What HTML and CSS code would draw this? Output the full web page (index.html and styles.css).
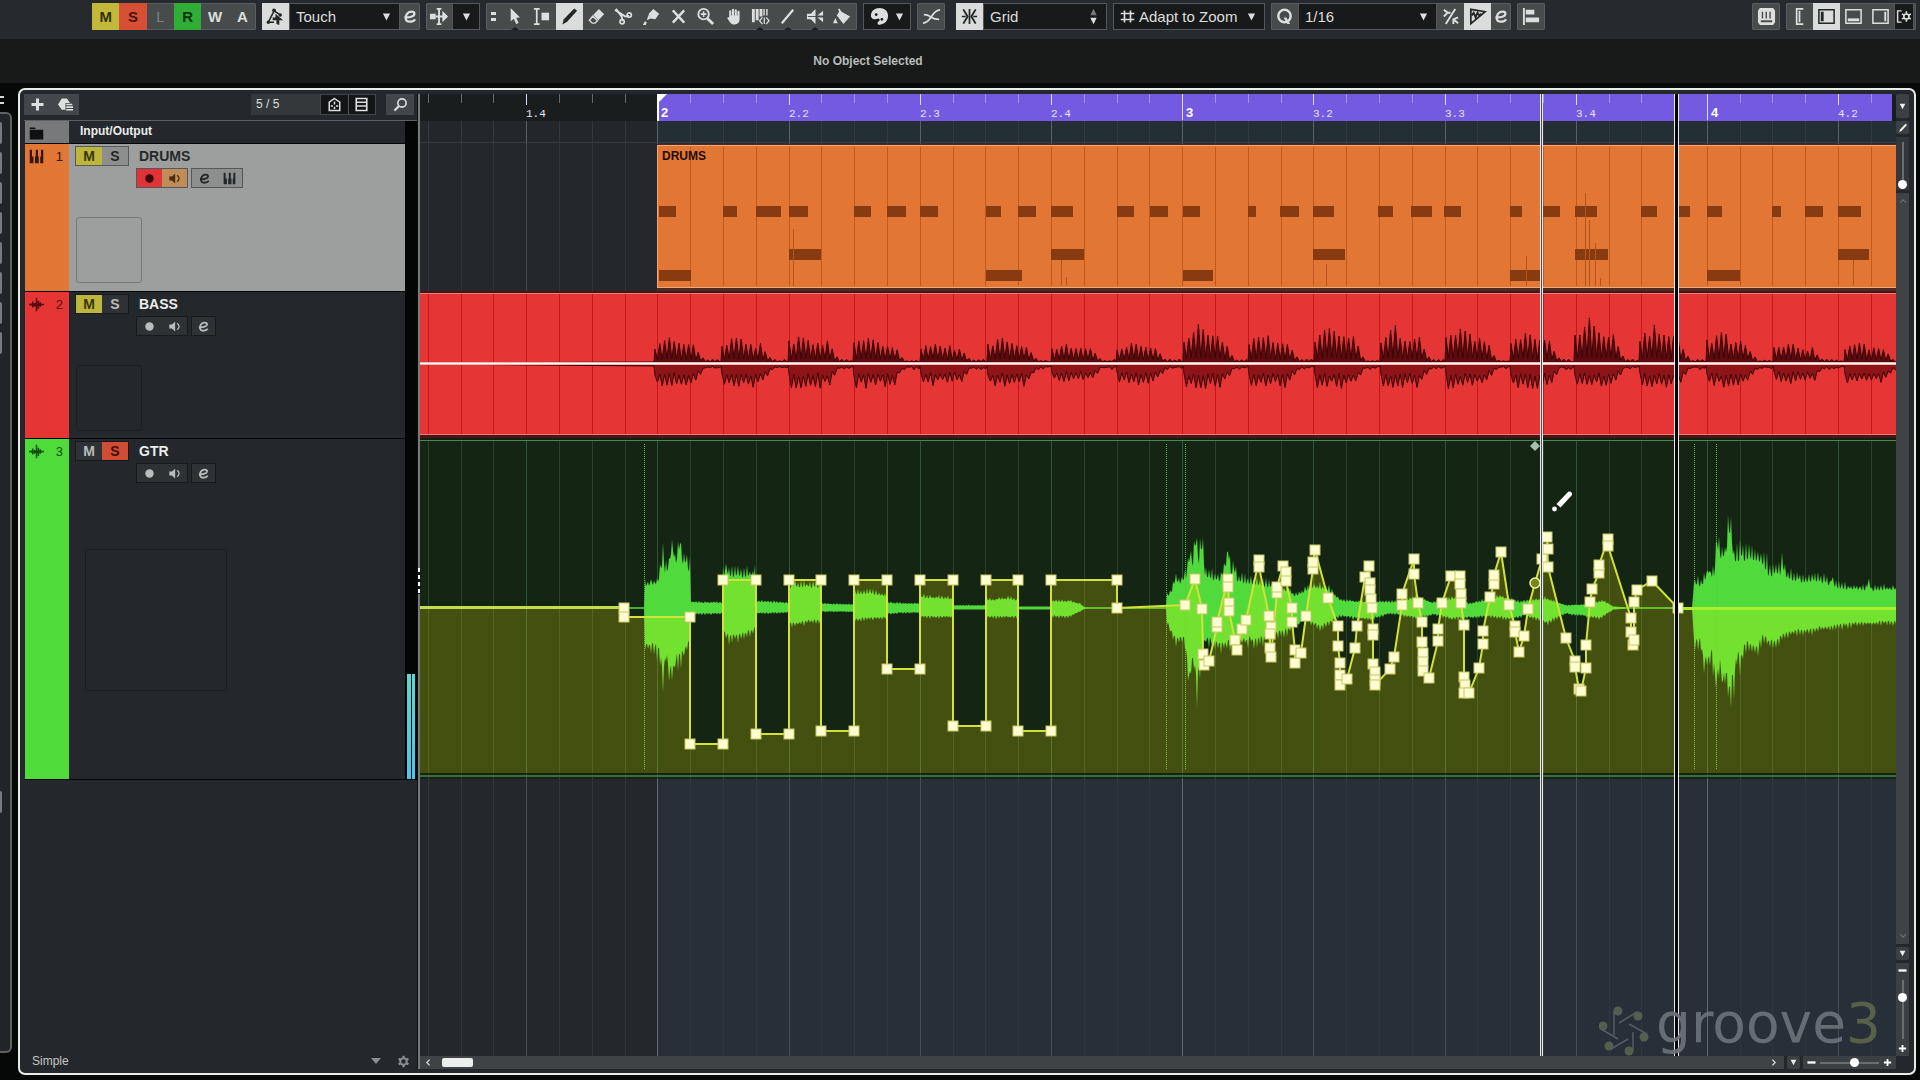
FILE: index.html
```html
<!DOCTYPE html>
<html lang="en">
<head>
<meta charset="utf-8">
<title>Project</title>
<link rel="stylesheet" href="styles.css">
</head>
<body>
<svg class="sprite" aria-hidden="true">
  <symbol id="i-auto" viewBox="0 0 20 20"><path d="M2.500 16 8.500 4l6 4M2.500 16h6" fill="none" stroke="currentColor" stroke-width="1.600"/><circle cx="8.500" cy="3.500" r="2"/><circle cx="2.500" cy="16" r="1.800"/><circle cx="15" cy="8.500" r="1.800"/><path d="M10 7l8 7h-4v5l-3-1v-4H7v-3h3z"/></symbol>
  <symbol id="i-e" viewBox="0 0 20 20"><path d="M3.500 11c6 .5 12-1 12-4.500C15.500 3.500 9 2.800 6 7c-3 4.500-1.500 9.500 3.500 9.500 3 0 5.500-1 7-3" fill="none" stroke="currentColor" stroke-width="2.800"/></symbol>
  <symbol id="i-scroll" viewBox="0 0 20 20"><path d="M0 7h6v6H0zM13 4l6 6-6 6z"/><path d="M9.500 2v16M7 2h5M7 18h5M6 10h8" fill="none" stroke="currentColor" stroke-width="2"/></symbol>
  <symbol id="i-arrow" viewBox="0 0 20 20"><path d="M6 1v14l3.300-2.600 2.400 5.600 2.600-1.100-2.500-5.500 4-.4z"/></symbol>
  <symbol id="i-range" viewBox="0 0 20 20"><path d="M2 2h6M2 18h6M5 2v16" fill="none" stroke="currentColor" stroke-width="1.800"/><path d="M10 6h8v8h-8z"/></symbol>
  <symbol id="i-pencil" viewBox="0 0 20 20"><path d="M15 1.500 18 4 7.500 15.500 2.500 18.500 4 13z"/></symbol>
  <symbol id="i-eraser" viewBox="0 0 20 20"><path d="M12.500 2 18 7.500l-6 6.500L6.500 8.500z"/><path d="m6 9.500 5 5-2.500 2.500H5.500L2.500 14z" fill="none" stroke="currentColor" stroke-width="1.500"/></symbol>
  <symbol id="i-cut" viewBox="0 0 20 20"><path d="m1 3 11 7 4-.5M2 2l6 8 1 5" fill="none" stroke="currentColor" stroke-width="2"/><circle cx="16" cy="8.500" r="2.300" fill="none" stroke="currentColor" stroke-width="1.700"/><circle cx="8.500" cy="15.500" r="2.300" fill="none" stroke="currentColor" stroke-width="1.700"/></symbol>
  <symbol id="i-glue" viewBox="0 0 20 20"><path d="m12 2 6 5-4 6-5-1-2-5zM7 8l2 4-4 2zM3 15l2 1-1 3H1z"/></symbol>
  <symbol id="i-x" viewBox="0 0 20 20"><path d="m4 3.500 12 13M16 3.500 4 16.500" fill="none" stroke="currentColor" stroke-width="2.600"/></symbol>
  <symbol id="i-zoom" viewBox="0 0 20 20"><circle cx="8" cy="7.500" r="5.500" fill="none" stroke="currentColor" stroke-width="2"/><path d="m12 12 6 6" stroke="currentColor" stroke-width="3"/><path d="M5 7.500h6M8 4.500v6" stroke="currentColor" stroke-width="1.600"/></symbol>
  <symbol id="i-hand" viewBox="0 0 20 20"><path d="M5.500 11V4.500a1.100 1.100 0 0 1 2.200 0V9h.7V3a1.100 1.100 0 0 1 2.200 0v6h.7V3.500a1.100 1.100 0 0 1 2.200 0V9h.7V5a1.100 1.100 0 0 1 2.200 0v8c0 3-2 5.500-5 5.500-4 0-5-2-8-7 1-1 2.100-.5 2.100-.5z"/></symbol>
  <symbol id="i-warp" viewBox="0 0 20 20"><path d="M1 2h3v14H1zM5 2h3v12H5zM9 2h3v8H9zM13 2h1.500v7H13zM16 2h1.500v7H16z"/><path d="m12 11-3 3.500 3 3.500m4-7 3 3.500-3 3.500M14 11v7" fill="none" stroke="currentColor" stroke-width="1.300"/></symbol>
  <symbol id="i-line" viewBox="0 0 20 20"><path d="M4 17 16 3" stroke="currentColor" stroke-width="2.400"/></symbol>
  <symbol id="i-mute" viewBox="0 0 20 20"><path d="M1 7h4l5-5v16l-5-5H1zM12 9l6-5v5zM12 11h6v5z"/><path d="M2 10h9" stroke="#484b4c" stroke-width="1"/></symbol>
  <symbol id="i-fill" viewBox="0 0 20 20"><path d="m7 4 11 6-7 8-7-9z"/><path d="m9 7-3-5" stroke="currentColor" stroke-width="1.800"/><path d="M2.500 11.500 5 17H0z"/></symbol>
  <symbol id="i-color" viewBox="0 0 20 20"><path fill-rule="evenodd" d="M10 1c5 0 9 3 9 8 0 4-2 8-6 9-3 1-5 1-5-1s3-2 2-4-3 0-5 0c-3 0-4-2-4-4 0-5 4-8 9-8zM5 8a1.500 1.500 0 1 0 3 0 1.500 1.500 0 0 0-3 0zm6 5a1.500 1.500 0 1 0 3 0 1.500 1.500 0 0 0-3 0z"/></symbol>
  <symbol id="i-cross" viewBox="0 0 20 20"><path d="M1 17c9 0 9-14 18-14M2 8c5 0 5 1 8 3s4 2 8 2" fill="none" stroke="currentColor" stroke-width="1.800"/></symbol>
  <symbol id="i-snap" viewBox="0 0 20 20"><path d="M10 2v16M2 10h4M14 10h4" stroke="currentColor" stroke-width="1.800"/><path d="m3.500 2.500 4.500 7.500-4.500 7.500M16.500 2.500 12 10l4.500 7.500" fill="none" stroke="currentColor" stroke-width="2"/></symbol>
  <symbol id="i-hash" viewBox="0 0 20 20"><path d="M6 2v16M14 2v16M1 6h18M1 14h18" stroke="currentColor" stroke-width="2.200"/></symbol>
  <symbol id="i-q" viewBox="0 0 20 20"><circle cx="10" cy="9.500" r="6.500" fill="none" stroke="currentColor" stroke-width="2.600"/><path d="M9 11h3l4 7h-3z"/></symbol>
  <symbol id="i-iq" viewBox="0 0 20 20"><path d="M15 2 5 18M3 3l4 3-4 4M7 6h3M18 11l-5 2v5M13 13l5 4" fill="none" stroke="currentColor" stroke-width="2"/></symbol>
  <symbol id="i-wavq" viewBox="0 0 20 20"><path d="M3 2.500v15L18 5z" fill="none" stroke="currentColor" stroke-width="1.800"/><path d="m4 9 2-3 2 5 2-5 2 3 2-2" fill="none" stroke="currentColor" stroke-width="2"/></symbol>
  <symbol id="i-align" viewBox="0 0 20 20"><path d="M1 1h2v18H1zM4 3h9v5H4zM4 11h14v5H4z"/></symbol>
  <symbol id="i-keys" viewBox="0 0 20 20"><path fill-rule="evenodd" d="M3 1h14l2 3v12l-2 3H3l-2-3V4zm2 4v7h1.500V5zm4 0v7h1.500V5zm4 0v7h1.500V5zM4 14v2h12v-2z"/></symbol>
  <symbol id="i-z1" viewBox="0 0 20 20"><path d="M14 2H7v16h7M10 4v12" fill="none" stroke="currentColor" stroke-width="1.800"/></symbol>
  <symbol id="i-z2" viewBox="0 0 20 20"><path d="M2 3h16v14H2z" fill="none" stroke="currentColor" stroke-width="1.600"/><path d="M4 5h3v10H4z"/></symbol>
  <symbol id="i-z3" viewBox="0 0 20 20"><path d="M2 3h16v14H2z" fill="none" stroke="currentColor" stroke-width="1.600"/><path d="M4 12h12v3H4z"/></symbol>
  <symbol id="i-z4" viewBox="0 0 20 20"><path d="M2 3h16v14H2z" fill="none" stroke="currentColor" stroke-width="1.600"/><path d="M14 5h2v10h-2z"/></symbol>
  <symbol id="i-gear" viewBox="0 0 20 20"><circle cx="10" cy="10" r="5" fill="none" stroke="currentColor" stroke-width="3"/><path d="M10 1v4M10 15v4M2.500 5.500 6 7.600M14 12.400l3.500 2.100M2.500 14.500 6 12.400M14 7.600l3.500-2.100" stroke="currentColor" stroke-width="3.400"/></symbol>
  <symbol id="i-layout" viewBox="0 0 20 20"><path d="M7 3H2v14h5" fill="none" stroke="currentColor" stroke-width="1.800"/><circle cx="13" cy="10" r="3.200" fill="none" stroke="currentColor" stroke-width="2"/><path d="M13 3.500v3M13 13.500v3M7.500 6.800l2.500 1.500M16 11.700l2.500 1.500M7.500 13.200l2.500-1.500M16 8.300l2.500-1.500" stroke="currentColor" stroke-width="2"/></symbol>
  <symbol id="i-plus" viewBox="0 0 20 20"><path d="M10 2v16M2 10h16" stroke="currentColor" stroke-width="4"/></symbol>
  <symbol id="i-preset" viewBox="0 0 20 20"><path d="M5 2h7l4 6h-6v9H5L0 10z"/><path d="M11 10h8M11 13.500h9M11 17h9" stroke="currentColor" stroke-width="2.200"/></symbol>
  <symbol id="i-agents" viewBox="0 0 20 20"><path d="m10 2 7 5v11H3V7z" fill="none" stroke="currentColor" stroke-width="2"/><path d="M10 6v4M10 13v3M5 12h3M12 12h3" stroke="currentColor" stroke-width="2"/></symbol>
  <symbol id="i-list" viewBox="0 0 20 20"><path d="M3 2h14v16H3zM3 7h14M3 12h14" fill="none" stroke="currentColor" stroke-width="2.200"/></symbol>
  <symbol id="i-find" viewBox="0 0 20 20"><circle cx="12" cy="8" r="5.500" fill="none" stroke="currentColor" stroke-width="2.200"/><path d="m8 12-6 6" stroke="currentColor" stroke-width="3"/></symbol>
  <symbol id="i-folder" viewBox="0 0 20 20"><path d="M1 2h7l1 2H1zM1 5h18v13H1z"/></symbol>
  <symbol id="i-piano" viewBox="0 0 20 20"><path d="M1 1h3v9h2v9H1zM8 10h1V1h3v9h1v9H8zM15 10h1V1h3v18h-4z"/></symbol>
  <symbol id="i-wave" viewBox="0 0 20 20"><path d="M0 10h3M5 6v8M7.500 8v5M10 1v18M12.500 5v11M15 7v6M17 10h3M3 9v2" stroke="currentColor" stroke-width="2"/><path d="M3 8.500h14v3.500H3z"/></symbol>
  <symbol id="i-rec" viewBox="0 0 20 20"><circle cx="10" cy="10" r="6.500"/></symbol>
  <symbol id="i-mon" viewBox="0 0 20 20"><path d="M2 7h4l5-4.500v15L6 13H2z"/><path d="M14 5c4 3 4 7 0 10" fill="none" stroke="currentColor" stroke-width="2"/></symbol>
  <symbol id="i-down" viewBox="0 0 20 20"><path d="M2 2h16l-8 16z"/></symbol>
  <symbol id="i-up" viewBox="0 0 20 20"><path d="M2 18h16L10 2z"/></symbol>
  <symbol id="i-chev" viewBox="0 0 20 20"><path d="m6 3 7 7-7 7" fill="none" stroke="currentColor" stroke-width="3"/></symbol>
  <symbol id="i-minus" viewBox="0 0 20 20"><path d="M1 10h18" stroke="currentColor" stroke-width="5"/></symbol>
</svg>

<header class="toolbar">
  <div class="group states">
    <button class="on-yellow">M</button><button class="on-red">S</button><button class="off">L</button><button class="on-green">R</button><button>W</button><button>A</button>
  </div>
  <div class="group automation">
    <button class="cell active" aria-label="Automation"><svg><use href="#i-auto"/></svg></button>
    <label class="drop"><select aria-label="Automation mode"><option>Touch</option></select><svg><use href="#i-down"/></svg></label>
    <button class="narrow" aria-label="Automation panel"><svg><use href="#i-e"/></svg></button>
  </div>
  <div class="group scrollmode">
    <button aria-label="Auto-scroll"><svg><use href="#i-scroll"/></svg></button>
    <button class="dark" aria-label="Auto-scroll settings"><svg class="tri"><use href="#i-down"/></svg></button>
  </div>
  <div class="group tools">
    <span class="grip"></span>
    <button class="more" aria-label="Select"><svg><use href="#i-arrow"/></svg></button>
    <button aria-label="Range"><svg><use href="#i-range"/></svg></button>
    <button class="active" aria-label="Draw"><svg><use href="#i-pencil"/></svg></button>
    <button aria-label="Erase"><svg><use href="#i-eraser"/></svg></button>
    <button aria-label="Split"><svg><use href="#i-cut"/></svg></button>
    <button aria-label="Glue"><svg><use href="#i-glue"/></svg></button>
    <button aria-label="Mute"><svg><use href="#i-x"/></svg></button>
    <button aria-label="Zoom"><svg><use href="#i-zoom"/></svg></button>
    <button aria-label="Comp"><svg><use href="#i-hand"/></svg></button>
    <button class="more" aria-label="Time warp"><svg><use href="#i-warp"/></svg></button>
    <button class="more" aria-label="Line"><svg><use href="#i-line"/></svg></button>
    <button class="more" aria-label="Play"><svg><use href="#i-mute"/></svg></button>
    <button aria-label="Color"><svg><use href="#i-fill"/></svg></button>
  </div>
  <div class="group palette">
    <button class="dark" aria-label="Colors"><svg><use href="#i-color"/></svg><svg class="tri"><use href="#i-down"/></svg></button>
  </div>
  <div class="group single"><button aria-label="Crossfade"><svg><use href="#i-cross"/></svg></button></div>
  <div class="group snap">
    <button class="cell active" aria-label="Snap"><svg><use href="#i-snap"/></svg></button>
    <label class="drop"><select aria-label="Snap type"><option>Grid</option></select><span class="spin"><svg><use href="#i-up"/></svg><svg><use href="#i-down"/></svg></span></label>
  </div>
  <div class="group gridtype">
    <label class="drop with-icon"><svg class="lead"><use href="#i-hash"/></svg><select aria-label="Grid type"><option>Adapt to Zoom</option></select><svg><use href="#i-down"/></svg></label>
  </div>
  <div class="group quantize">
    <button class="cell" aria-label="Quantize"><svg><use href="#i-q"/></svg></button>
    <label class="drop"><select aria-label="Quantize preset"><option>1/16</option></select><svg><use href="#i-down"/></svg></label>
    <button class="cell" aria-label="Iterative"><svg><use href="#i-iq"/></svg></button>
    <button class="cell active" aria-label="AudioWarp quantize"><svg><use href="#i-wavq"/></svg></button>
    <button class="narrow" aria-label="Quantize panel"><svg><use href="#i-e"/></svg></button>
  </div>
  <div class="group single"><button aria-label="Align"><svg><use href="#i-align"/></svg></button></div>
  <div class="group single end"><button aria-label="On-screen keyboard"><svg><use href="#i-keys"/></svg></button></div>
  <div class="group zones">
    <button class="cell" aria-label="Inspector"><svg><use href="#i-z1"/></svg></button>
    <button class="cell active" aria-label="Left zone"><svg><use href="#i-z2"/></svg></button>
    <button class="cell" aria-label="Lower zone"><svg><use href="#i-z3"/></svg></button>
    <button class="cell" aria-label="Right zone"><svg><use href="#i-z4"/></svg></button>
    <button class="dark narrow" aria-label="Set up window layout"><svg class="layout"><use href="#i-layout"/></svg></button>
  </div>
</header>

<div class="infoline">No Object Selected</div>

<main class="workspace">
  <aside class="rail">
    <span class="rail-menu"></span>
    <div class="rail-panel"><i></i><i></i><i></i><i></i><i></i><i></i><i></i><i></i><i class="last"></i></div>
  </aside>

  <div class="window">
    <section class="tracklist">
      <div class="list-head">
        <div class="minis add"><button aria-label="Add track"><svg><use href="#i-plus"/></svg></button><button aria-label="Track preset"><svg><use href="#i-preset"/></svg></button></div>
        <div class="count">5 / 5</div>
        <div class="minis views"><button aria-label="Visibility agents"><svg><use href="#i-agents"/></svg></button><button aria-label="Visibility presets"><svg><use href="#i-list"/></svg></button></div>
        <div class="minis find"><button aria-label="Find tracks"><svg><use href="#i-find"/></svg></button></div>
      </div>
      <div class="track io"><div class="tag"><svg><use href="#i-folder"/></svg></div><div class="body">Input/Output</div><div class="meter"></div></div>

      <div class="track drums">
        <div class="tag"><svg><use href="#i-piano"/></svg><span>1</span></div>
        <div class="body">
          <div class="line"><div class="ms"><button class="lit">M</button><button>S</button></div><h2>DRUMS</h2></div>
          <div class="line second"><div class="ms"><button class="rec" aria-label="Record"><svg><use href="#i-rec"/></svg></button><button class="mon" aria-label="Monitor"><svg><use href="#i-mon"/></svg></button></div><div class="ms"><button aria-label="Edit channel"><svg><use href="#i-e"/></svg></button><button aria-label="Edit instrument"><svg><use href="#i-piano"/></svg></button></div></div>
          <div class="slot"></div>
        </div>
        <div class="meter"></div>
      </div>

      <div class="track bass">
        <div class="tag"><svg><use href="#i-wave"/></svg><span>2</span></div>
        <div class="body">
          <div class="line"><div class="ms"><button class="lit">M</button><button>S</button></div><h2>BASS</h2></div>
          <div class="line second"><div class="ms"><button aria-label="Record"><svg><use href="#i-rec"/></svg></button><button aria-label="Monitor"><svg><use href="#i-mon"/></svg></button></div><div class="ms one"><button aria-label="Edit channel"><svg><use href="#i-e"/></svg></button></div></div>
          <div class="slot"></div>
        </div>
        <div class="meter"></div>
      </div>

      <div class="track gtr">
        <div class="tag"><svg><use href="#i-wave"/></svg><span>3</span></div>
        <div class="body">
          <div class="line"><div class="ms"><button>M</button><button class="solo">S</button></div><h2>GTR</h2></div>
          <div class="line second"><div class="ms"><button aria-label="Record"><svg><use href="#i-rec"/></svg></button><button aria-label="Monitor"><svg><use href="#i-mon"/></svg></button></div><div class="ms one"><button aria-label="Edit channel"><svg><use href="#i-e"/></svg></button></div></div>
          <div class="slot"></div>
        </div>
        <div class="meter"><b></b><b></b></div>
      </div>

      <footer class="list-foot"><span>Simple</span><svg class="pick" viewBox="0 0 10 6"><path d="M0 0h10L5 6z"/></svg><svg class="gear"><use href="#i-gear"/></svg></footer>
    </section>

    <div class="divider"><span></span></div>

    <section class="arrange">
      <div class="lanes">
        <svg class="lane ruler" id="ruler"></svg>
        <svg class="lane marker" id="marker"></svg>
        <svg class="lane short" id="drums"></svg>
        <svg class="lane short" id="bass"></svg>
        <svg class="lane tall" id="gtr"></svg>
        <svg class="lane empty" id="empty"></svg>
        <div class="playhead ghost"></div>
        <div class="playhead"></div>
        <svg class="cursor" viewBox="0 0 24 24"><path d="M5.500 15 17.500 2.500q4-.5 3.500 3.500L9.500 18.500z" fill="#fff"/><circle cx="3.500" cy="20" r="2.400" fill="#fff"/></svg>
        <div class="watermark">
          <svg viewBox="0 0 50 50"><g fill="#5c6450"><circle cx="19" cy="5" r="4.500"/><circle cx="39" cy="10" r="4.500"/><circle cx="45" cy="31" r="4.500"/><circle cx="30" cy="45" r="4.500"/><circle cx="10" cy="40" r="4.500"/><circle cx="4" cy="20" r="4.500"/></g><path d="M15 5v24M38 6 20 17M48 28 30 18M34 45V26M12 43l17-10M2 23l17 10" fill="none" stroke="#5a6268" stroke-width="1.500"/></svg>
          <span>groove<em>3</em></span>
        </div>
      </div>
      <div class="hbar">
        <div class="hscroll"><svg class="flip"><use href="#i-chev"/></svg><span class="thumb"></span><svg class="far"><use href="#i-chev"/></svg></div>
        <button class="tiny" aria-label="Horizontal zoom presets"><svg><use href="#i-down"/></svg></button>
        <div class="hzoom"><svg><use href="#i-minus"/></svg><input type="range" aria-label="Horizontal zoom" min="0" max="100" value="60"><svg><use href="#i-plus"/></svg></div>
      </div>
    </section>

    <aside class="vbar">
      <button class="tiny high" aria-label="Ruler format"><svg><use href="#i-down"/></svg></button>
      <button class="tiny draw" aria-label="Draw in marker track"><svg><use href="#i-pencil"/></svg></button>
      <div class="vwave"><input class="vert" type="range" aria-label="Waveform zoom" min="0" max="100" value="100"></div>
      <div class="vscroll"><svg class="turn-up"><use href="#i-chev"/></svg><svg class="turn-down"><use href="#i-chev"/></svg></div>
      <button class="tiny" aria-label="Vertical zoom presets"><svg><use href="#i-down"/></svg></button>
      <div class="vzoom"><svg><use href="#i-minus"/></svg><input class="vert" type="range" aria-label="Vertical zoom" min="0" max="100" value="26"><svg><use href="#i-plus"/></svg></div>
    </aside>
  </div>
</main>
<script src="arrange.js"></script>
</body>
</html>
```
FILE: styles.css
```css
* { box-sizing: border-box; }
body {
  margin: 0; height: 100vh; min-height: 900px; display: flex; flex-direction: column;
  background: #060707; color: #dcdfdd; overflow: hidden;
  font: 12px "Liberation Sans", Arial, sans-serif;
}
.sprite { position: absolute; width: 0; height: 0; }
svg { fill: currentColor; display: block; flex: none; }
button {
  font: inherit; color: inherit; background: none; border: 0; padding: 0; margin: 0;
  display: flex; align-items: center; justify-content: center;
}

/* toolbar */
.toolbar { height: 39px; padding: 3px 4px 0 92px; display: flex; align-items: flex-start; gap: 6px; background: #26292d; flex: none; }
.group { height: 27px; display: flex; background: #484b4c; box-shadow: inset 0 0 0 1px #5b5e5f; border-radius: 2px; flex: none; }
.group button { flex: 1; position: relative; }
.group svg { width: 19px; height: 19px; }
.group .cell { flex: none; width: 27px; }
.group .narrow { flex: none; width: 20px; }
.group .narrow svg { width: 16px; height: 17px; }
.group .active { background: #d9dcda; color: #232627; }
.group .dark { background: #17191a; border: 1px solid #55585a; gap: 6px; }
.group svg.tri { width: 9px; height: 10px; }
.states { width: 164px; font-size: 15px; font-weight: bold; }
.group .on-yellow { background: #c2b83a; color: #34320e; }
.group .on-red { background: #d74f35; color: #4b130b; }
.group .on-green { background: #2fad34; color: #0b350d; }
.group .off { color: #7b7e7f; font-weight: normal; }
.automation { width: 158px; }
.scrollmode { width: 54px; }
.tools { width: 371px; padding-right: 1px; }
.grip { width: 15px; flex: none; display: grid; place-content: center; gap: 3px; }
.grip::before, .grip::after { content: ""; width: 5px; height: 3px; background: #dcdfdd; }
.more::after { content: ""; position: absolute; bottom: 0; left: 50%; margin-left: -4px; border: 4px solid transparent; border-top: 0; border-bottom: 3px solid #1c1f20; }
.palette { width: 48px; }
.single { width: 28px; }
.snap { width: 151px; margin-left: 5px; }
.gridtype { width: 152px; }
.quantize { width: 240px; }
.end { margin-left: auto; }
.zones { width: 130px; }
.drop { flex: 1; display: flex; align-items: center; gap: 4px; padding: 0 8px 0 6px; background: #17191a; border: 1px solid #55585a; }
.drop select { flex: 1; min-width: 0; appearance: none; background: none; border: 0; padding: 0; color: #dcdfdd; font: 15px "Liberation Sans", Arial, sans-serif; }
.drop svg { width: 9px; height: 10px; }
.drop .lead { width: 15px; height: 15px; }
.spin { display: grid; gap: 1px; }
.spin svg { height: 8px; }
.spin svg:first-child { color: #777a7b; }

.infoline { height: 44px; flex: none; background: #171a19; color: #b9bcbb; font-weight: bold; display: flex; align-items: center; justify-content: center; padding-right: 184px; }

/* workspace */
.workspace { flex: 1; min-height: 0; display: flex; gap: 6px; padding: 5px 4px 5px 0; }
.rail { width: 12px; display: flex; flex-direction: column; padding: 8px 0 22px; }
.rail-menu { height: 8px; width: 4px; border: solid #d5d8d6; border-width: 2px 0; margin-bottom: 8px; }
.rail-panel { flex: 1; background: #222528; border: 2px solid #5f6263; border-left: 0; border-radius: 0 6px 6px 0; padding-top: 8px; display: flex; flex-direction: column; gap: 8px; }
.rail-panel i { height: 22px; width: 2px; background: #777a7b; border-radius: 0 3px 3px 0; }
.rail-panel .last { margin-top: auto; margin-bottom: 238px; }
.window { flex: 1; min-width: 0; display: flex; border: 2px solid #e8ebe8; border-radius: 7px; background: #24272b; }

/* track list */
.tracklist { width: 397px; flex: none; display: flex; flex-direction: column; padding-left: 4px; }
.list-head { height: 31px; flex: none; display: flex; align-items: center; padding: 0 3px 1px 0; border-bottom: 1px solid #5d6062; }
.minis { height: 21px; display: flex; background: #43464a; }
.minis button { flex: 1; }
.minis svg { width: 15px; height: 15px; }
.add { width: 55px; }
.count { width: 69px; height: 21px; margin-left: auto; padding-left: 5px; line-height: 21px; background: #35383a; font-size: 12px; }
.views { width: 56px; background: #131516; border: 1px solid #44474a; }
.views button + button { border-left: 1px solid #55585a; }
.find { width: 28px; margin-left: 10px; }
.track { flex: none; display: grid; grid-template-columns: 44px 1fr 12px; border-bottom: 1px solid #050606; margin-left: 1px; }
.tag { display: flex; justify-content: space-between; padding: 5px 6px 0 3px; color: #35150a; font-size: 13px; line-height: 15px; }
.tag svg { width: 17px; height: 15px; }
.meter { background: #040505; display: flex; align-items: flex-end; gap: 1px; padding: 0 2px; }
.meter b { flex: 1; height: 105px; background: linear-gradient(#59d8d0, #4fc6e8); }
.io { height: 23px; }
.io .tag { background: #77797a; color: #0e1011; }
.io .body { padding-left: 11px; font-weight: bold; line-height: 21px; color: #e9ecea; }
.drums { height: 148px; }
.bass { height: 147px; }
.drums .tag { background: #e27735; }
.bass .tag { background: #e53534; color: #560b0c; }
.gtr { height: 341px; }
.gtr .tag { background: #4fdc3a; color: #145010; }
.track:not(.io) .body { padding: 2px 6px; }
.line { display: flex; align-items: center; gap: 10px; height: 20px; }
.line h2 { margin: 0; font-size: 14px; color: #eceeec; }
.second { margin: 2px 0 0 61px; gap: 3px; }
.ms { width: 54px; height: 20px; display: flex; background: #2f3235; border: 1px solid #17191b; font-size: 14px; font-weight: bold; color: #b9bcbb; }
.second .ms { width: 52px; }
.second .one { width: 25px; }
.ms button { flex: 1; }
.ms svg { width: 13px; height: 13px; }
.ms .lit { background: #bdb53c; color: #3a370f; }
.ms .solo { background: #d04c33; color: #3f0e08; }
.drums .body { background: #9d9f9e; }
.drums .line h2 { color: #26292a; }
.drums .ms { background: #8d8f8f; border-color: #55585a; color: #232627; }
.drums .rec { background: #df3338; color: #3c0a0a; }
.drums .mon { background: #c08c58; color: #4b2c10; }
.slot { width: 66px; height: 66px; margin: 29px 0 0 1px; border: 1px solid #1b1d20; border-radius: 3px; }
.drums .slot { border-color: #77797a; }
.gtr .slot { width: 142px; height: 142px; margin: 66px 0 0 10px; }
.list-foot { margin-top: auto; height: 24px; display: flex; align-items: center; gap: 16px; padding: 0 7px 0 8px; color: #c4c7c6; }
.list-foot span { flex: 1; }
.pick { width: 10px; height: 6px; color: #8a8d90; }
.gear { width: 13px; height: 13px; color: #8a8d90; }
.divider { width: 3px; flex: none; margin: 4px 0; border-left: 1px solid #0d0e0f; background: #77797b; display: flex; align-items: center; }
.divider span { width: 2px; height: 26px; margin-bottom: 2px; background: repeating-linear-gradient(#fff 0 4px, #111 4px 7px); }

/* arrange area */
.arrange { flex: 1; min-width: 0; display: flex; flex-direction: column; padding: 4px 0; }
.lanes { flex: 1; min-height: 0; display: flex; flex-direction: column; position: relative; overflow: hidden; }
.lane { width: 100%; flex: none; overflow: hidden; }
.ruler { height: 27px; background: #1a1d1d; }
.marker { height: 23px; background: #23262b; }
.short { height: 147px; background: #24272b; }
.tall { height: 341px; background: #142513; }
.empty { flex: 1; min-height: 0; background: #24272b; }
.label { font: 11px "Liberation Mono", monospace; fill: #e6e4f4; }
.bar { font: bold 13px "Liberation Sans", sans-serif; fill: #fff; }
.clipname { font: bold 12px "Liberation Sans", sans-serif; fill: #1f0d05; }
.playhead { position: absolute; top: 0; bottom: 0; left: 1254px; width: 5px; background: #050506; border: solid #e9ebee; border-width: 0 1px; }
.ghost { left: 1120px; width: 3px; background: #4b4d4f; }
.cursor { position: absolute; left: 1131px; top: 395px; width: 24px; height: 24px; }
.watermark { position: absolute; right: 15px; bottom: 0; display: flex; align-items: flex-end; gap: 7px; opacity: .9; font: 55px "DejaVu Sans", sans-serif; line-height: 66px; color: #6c737a; }
.watermark em { font-style: normal; color: #5e664b; }
.watermark svg { width: 50px; height: 50px; }
.hbar { height: 13px; flex: none; display: flex; gap: 3px; }
.hscroll { flex: 1; display: flex; align-items: center; padding: 0 6px 0 4px; background: #404345; }
.hscroll svg { width: 8px; height: 9px; }
.flip { transform: scaleX(-1); }
.thumb { width: 31px; height: 9px; margin-left: 10px; background: #eceeed; border-radius: 2px; }
.far { margin-left: auto; }
.tiny { width: 13px; height: 13px; flex: none; background: #3d4042; color: #eceeed; border-radius: 2px; }
.tiny svg { width: 7px; height: 7px; }
.high { height: 24px; }
.high svg { height: 9px; }
.draw svg { width: 10px; height: 10px; }
.hzoom { width: 93px; display: flex; align-items: center; gap: 4px; padding: 0 4px; background: #3d4042; color: #fff; }
.hzoom svg, .vzoom svg { width: 9px; height: 9px; }
input[type=range] { appearance: none; flex: 1; min-width: 0; margin: 0; height: 9px; background: linear-gradient(#6b6e70, #6b6e70) center / 100% 2px no-repeat; }
input[type=range]::-webkit-slider-thumb { appearance: none; width: 9px; height: 9px; border-radius: 50%; background: #fff; }
input[type=range].vert { writing-mode: vertical-lr; width: 9px; height: auto; min-height: 0; background: linear-gradient(#6b6e70, #6b6e70) center / 2px 100% no-repeat; }
.vbar { width: 18px; flex: none; padding: 4px 5px 17px 0; display: flex; flex-direction: column; gap: 3px; }
.vwave { height: 53px; padding: 5px 2px 1px; background: #33363a; display: flex; flex-direction: column; flex: none; }
.vscroll { flex: 1; background: #404345; color: #6e7173; display: flex; flex-direction: column; align-items: center; justify-content: space-between; padding: 4px 0; }
.vscroll svg { width: 8px; height: 8px; }
.turn-up { transform: rotate(-90deg); }
.turn-down { transform: rotate(90deg); }
.vzoom { height: 93px; flex: none; background: #3d4042; color: #fff; display: flex; flex-direction: column; align-items: center; gap: 5px; padding: 3px 0; }
```
FILE: arrange.js
```js
// Horizontal coordinates are project pixels; SCROLL is the left edge of the view.
const SCROLL = 420, SIXTEENTH = 32.8, BAR2 = 657, END = 4600, LOOP_END = 1892;
const NS = "http://www.w3.org/2000/svg";

function lane(id, top) {
  const g = document.createElementNS(NS, "g");
  g.setAttribute("transform", `translate(${-SCROLL} ${-top})`);
  document.getElementById(id).append(g);
  return (name, attrs, text) => {
    const el = document.createElementNS(NS, name);
    for (const k in attrs) el.setAttribute(k, attrs[k]);
    if (text) el.textContent = text;
    g.append(el);
    return el;
  };
}
const rect = (add, x, y, width, height, fill) => add("rect", { x, y, width, height, fill });

let seed = 7;
const rnd = () => (seed = (seed * 16807) % 2147483647) / 2147483647;

function eachStep(fn) {
  for (let n = -7; n < 120; n++) fn(Math.round(BAR2 + .3 + n * SIXTEENTH), n);
}
function grid(add, y, h, fine, beat) {
  eachStep((x, n) => rect(add, x, y, 1, h, n % 4 ? fine : beat));
}

// ruler
const ruler = lane("ruler", 94);
rect(ruler, BAR2, 94, LOOP_END - BAR2, 27, "#735ae0");
eachStep((x, n) => {
  const bar = n % 16 === 0, beat = n % 4 === 0, lit = x >= BAR2;
  if (x > LOOP_END) return;
  rect(ruler, x, 94, 1, bar ? 26 : beat ? 11 : 9, bar || beat ? "#dcd8f2" : lit ? "#a594ee" : "#66696a");
  const num = 2 + Math.floor(n / 16), q = ((n % 16) + 16) % 16 / 4 + 1;
  if (bar) ruler("text", { x: x + 4, y: 117, class: "bar" }, String(num));
  else if (beat) ruler("text", { x, y: 117, class: "label" }, `${num}.${q}`);
});
ruler("path", { d: "M657 94h10l-8 8v19h-2z", fill: "#fff" });

// marker lane and the unused space under the tracks
const marker = lane("marker", 121);
rect(marker, BAR2, 121, END, 23, "#242e35");
grid(marker, 121, 23, "#34393e", "#5a6166");
rect(marker, SCROLL, 142, END, 1, "#383c40");
const empty = lane("empty", 779);
rect(empty, BAR2, 779, END, 2000, "#282f38");
grid(empty, 779, 2000, "#31363d", "#464d54");
eachStep((x, n) => { if (n % 16 === 0) rect(empty, x, 779, 1, 2000, "#626a72"); });

// drums
const drums = lane("drums", 144);
grid(drums, 144, 147, "#303338", "#45494d");
rect(drums, BAR2, 144, END, 147, "#4e2a21");
rect(drums, BAR2, 145, END, 143, "#f0a878");
rect(drums, BAR2 + 1, 146, END, 141, "#e27735");
eachStep(x => { if (x > BAR2 + 2) rect(drums, x, 147, 1, 139, "#c25a1b"); });
[[659,17],[723,14],[756,25],[789,19],[854,17],[887,19],[920,18],[986,15],[1018,18],[1051,22],[1117,17],[1150,18],[1183,17],[1248,8],[1280,19],[1313,21],[1378,15],[1411,21],[1444,17],[1510,12],[1543,17],[1575,22],[1641,16],[1674,16],[1707,15],[1772,9],[1805,18],[1838,23]]
  .forEach(([x, w]) => rect(drums, x, 206, w, 11, "#883a10"));
[[789,32],[1051,33],[1313,32],[1575,33],[1838,31]].forEach(([x, w]) => rect(drums, x, 249, w, 11, "#883a10"));
[[659,32],[986,36],[1183,30],[1510,32],[1707,33]].forEach(([x, w]) => rect(drums, x, 270, w, 11, "#883a10"));
[[793,229],[1061,260],[1066,277],[1326,264],[1526,256],[1585,193],[1589,220],[1595,243],[1600,278],[1853,260]]
  .forEach(([x, y]) => rect(drums, x, y, 1, 286 - y, "#b5551e"));
drums("text", { x: 662, y: 160, class: "clipname" }, "DRUMS");

// bass: pointed cycles above and below the centre line for each hit [start, height]
const bass = lane("bass", 291);
rect(bass, SCROLL, 291, END, 147, "#4a1517");
rect(bass, SCROLL, 293, END, 142, "#f07a78");
rect(bass, SCROLL, 294, END, 140, "#e53534");
grid(bass, 294, 140, "#c4171d", "#c4171d");
const hits = [[654,23],[721,24],[788,28],[853,25],[920,21],[987,23],[1051,18],[1116,20],[1183,35],[1248,28],[1314,34],[1380,33],[1445,35],[1510,29],[1574,42],[1639,34],[1706,29],[1773,19],[1844,19]];
let up = "M420 363", down = "M420 364";
hits.forEach(([start, amp], i) => {
  const next = i + 1 < hits.length ? hits[i + 1][0] : 1900;
  up += `L${start} 362`; down += `L${start} 366`;
  for (let x = start + 1, k = 0; x < next - 1; x += 2.4, k++) {
    const t = x - start;
    const body = t < 40 ? 1 : t < 50 ? 1 - (t - 40) / 12 : 0;
    const lump = .72 + .32 * Math.max(0, 1 - Math.abs(t - 15) / 12);
    const low = Math.min(amp, 24) * .9;
    const a = body ? amp * body * lump * (.78 + rnd() * .3) : 1 + rnd() * 2;
    const b = body ? low * body * (.7 + rnd() * .35) : 1 + rnd() * 3;
    up += `L${x.toFixed(1)} ${(362 - (k % 2 ? a * .15 : a)).toFixed(1)}`;
    down += `L${x.toFixed(1)} ${(366 + (k % 2 ? b : b * .45)).toFixed(1)}`;
  }
});
bass("path", { d: up + "L1900 362V363H420z", fill: "#5c0a0e", stroke: "#340507", "stroke-width": 1 });
bass("path", { d: down + "L1900 366V364H420z", fill: "#8f1417", stroke: "#340507", "stroke-width": 1 });
rect(bass, SCROLL, 362, END, 3, "#e9b5b2");
rect(bass, SCROLL, 363, END, 1, "#fff");

// guitar: waveform outline from [x, height] envelopes either side of the centre line
const gtr = lane("gtr", 438);
grid(gtr, 438, 341, "#25442a", "#2f5638");
const MID = 608;
const top_ = [[420,1],[644,1],[645,27],[652,29],[658,30],[661,47],[663,59],[665,46],[669,50],[672,74],[675,50],[680,74],[683,50],[686,55],[688,45],[690,50],[691,7],[722,6],[723,38],[727,46],[731,38],[740,40],[754,38],[755,54],[756,8],[788,6],[789,26],[800,26],[820,25],[821,5],[853,4],[854,17],[870,18],[886,14],[887,6],[919,5],[920,13],[952,11],[953,3],[985,3],[986,9],[1010,11],[1017,9],[1018,2],[1050,2],[1051,8],[1070,8],[1080,5],[1085,1],[1166,1],[1167,15],[1172,20],[1176,36],[1180,30],[1186,38],[1190,64],[1193,50],[1196,84],[1199,56],[1202,76],[1205,37],[1220,35],[1224,44],[1228,64],[1231,38],[1234,50],[1237,34],[1260,28],[1290,20],[1295,14],[1312,25],[1328,22],[1340,9],[1360,7],[1400,7],[1418,13],[1432,6],[1452,11],[1470,5],[1500,13],[1520,7],[1545,11],[1566,3],[1588,4],[1603,8],[1613,2],[1625,1],[1692,1],[1694,30],[1702,28],[1708,42],[1714,38],[1717,80],[1720,64],[1726,64],[1728,90],[1731,84],[1734,58],[1740,62],[1755,60],[1764,50],[1767,50],[1768,40],[1780,42],[1782,57],[1785,40],[1800,33],[1816,34],[1830,29],[1832,37],[1835,25],[1850,24],[1866,22],[1868,31],[1871,22],[1880,22],[1900,22]];
const bottom_ = [[420,1],[644,1],[645,42],[655,44],[660,52],[663,80],[666,57],[672,78],[676,60],[682,54],[690,40],[691,7],[722,6],[723,28],[730,34],[740,32],[756,24],[757,6],[788,5],[789,19],[795,18],[820,14],[821,4],[853,4],[854,13],[886,11],[887,6],[919,5],[920,10],[952,10],[953,2],[985,2],[986,10],[1017,10],[1018,2],[1050,2],[1051,9],[1068,10],[1080,4],[1085,1],[1166,1],[1167,15],[1174,35],[1185,38],[1189,80],[1193,58],[1197,90],[1202,44],[1206,36],[1225,44],[1235,38],[1260,36],[1290,25],[1305,12],[1320,22],[1340,9],[1370,13],[1390,6],[1418,11],[1434,7],[1452,12],[1490,9],[1510,12],[1525,8],[1547,16],[1566,6],[1600,11],[1613,2],[1625,1],[1692,1],[1694,40],[1700,38],[1704,64],[1712,52],[1716,86],[1720,66],[1723,88],[1726,74],[1729,96],[1734,82],[1737,54],[1740,62],[1747,40],[1756,50],[1763,33],[1773,41],[1790,28],[1816,25],[1840,20],[1868,17],[1900,16]];
function envelope(points, x) {
  let i = 1;
  while (i < points.length - 1 && points[i][0] < x) i++;
  const [x0, a] = points[i - 1], [x1, b] = points[i];
  return a + (b - a) * (x - x0) / (x1 - x0);
}
let wave = "M420 608";
const jag = (v, x) => v < 3 ? v * .8 : v * (x % 3 ? .76 + rnd() * .12 : .92 + rnd() * .22);
for (let x = 421; x < 1900; x++) wave += `L${x} ${(MID - jag(envelope(top_, x), x)).toFixed(1)}`;
for (let x = 1899; x > 420; x--) wave += `L${x} ${(MID + jag(envelope(bottom_, x), x)).toFixed(1)}`;
gtr("path", { d: wave + "z", fill: "#50da3c" });
[1166, 1185, 1694, 1716, 644].forEach(x => gtr("path", { d: `M${x + .5} 444V770`, stroke: "#55c24a", "stroke-width": 1, "stroke-dasharray": "1 1" }));

// volume automation breakpoints
const steps = [[624,608],[624,617],[690,617],[690,744],[723,744],[723,580],[756,580],[756,734],[789,734],[789,580],[821,580],[821,731],[854,731],[854,580],[887,580],[887,669],[920,669],[920,580],[953,580],[953,726],[986,726],[986,580],[1018,580],[1018,731],[1051,731],[1051,580],[1117,580],[1117,608]];
const drawn = [[1185,605],[1195,579],[1202,609],[1203,654],[1204,665],[1209,661],[1217,627],[1217,622],[1228,579],[1228,587],[1229,603],[1229,611],[1235,640],[1237,650],[1242,629],[1246,620],[1259,560],[1259,567],[1269,616],[1271,627],[1270,634],[1270,648],[1271,657],[1277,593],[1277,587],[1283,566],[1286,572],[1286,581],[1292,608],[1292,622],[1295,650],[1295,663],[1301,653],[1306,616],[1313,569],[1313,562],[1315,550],[1328,598],[1338,626],[1338,646],[1340,663],[1340,675],[1340,685],[1347,679],[1355,648],[1357,626],[1365,577],[1369,566],[1370,583],[1370,590],[1371,599],[1372,608],[1373,629],[1373,635],[1373,664],[1375,672],[1375,680],[1375,685],[1390,669],[1394,657],[1402,605],[1402,594],[1414,559],[1414,574],[1418,603],[1422,622],[1422,642],[1423,653],[1423,662],[1423,671],[1429,678],[1438,641],[1438,629],[1442,603],[1451,576],[1460,576],[1460,584],[1461,594],[1461,603],[1464,625],[1464,677],[1465,685],[1464,693],[1469,693],[1479,668],[1483,644],[1483,631],[1490,597],[1494,584],[1494,575],[1501,552],[1509,605],[1515,626],[1515,632],[1519,652],[1524,636],[1528,609],[1535,583],[1542,559],[1548,549],[1547,537],[1548,567],[1566,638],[1575,661],[1575,667],[1579,689],[1581,691],[1586,668],[1586,645],[1590,602],[1592,589],[1599,573],[1599,565],[1608,539],[1608,546],[1631,618],[1631,632],[1633,645],[1634,640],[1634,602],[1637,590],[1652,581],[1678,608]];
const pts = [[SCROLL, 608], ...steps, ...drawn, [END, 608]];
const curve = "M" + pts.map(p => p.join(" ")).join("L");
gtr("path", { d: `${curve}V774H${SCROLL}z`, fill: "#ff0", "fill-opacity": .2 });
gtr("path", { d: curve, fill: "none", stroke: "#d2e23a", "stroke-width": 2 });
rect(gtr, SCROLL, 606, 204, 3, "#c3dc4c");
rect(gtr, 1682, 607, END, 3, "#a8f02c");
[...steps, ...drawn].forEach(([x, y]) => {
  if (x === 1535) gtr("circle", { cx: x, cy: y, r: 5, fill: "#76871c", stroke: "#f4f3a6", "stroke-width": 1.5 });
  else gtr("rect", { x: x - 5, y: y - 5, width: 10, height: 10, fill: "#fdfdd2", stroke: "#c9c866", "stroke-width": 1 });
});
rect(gtr, SCROLL, 438, END, 2, "#12200f");
rect(gtr, SCROLL, 440, END, 1, "#4e8553");
rect(gtr, SCROLL, 773, END, 1, "#14250f");
rect(gtr, SCROLL, 775, END, 2, "#3f6a3d");
gtr("path", { d: "M1535 441l5 5-5 5-5-5z", fill: "#a5bfa8" });
```
